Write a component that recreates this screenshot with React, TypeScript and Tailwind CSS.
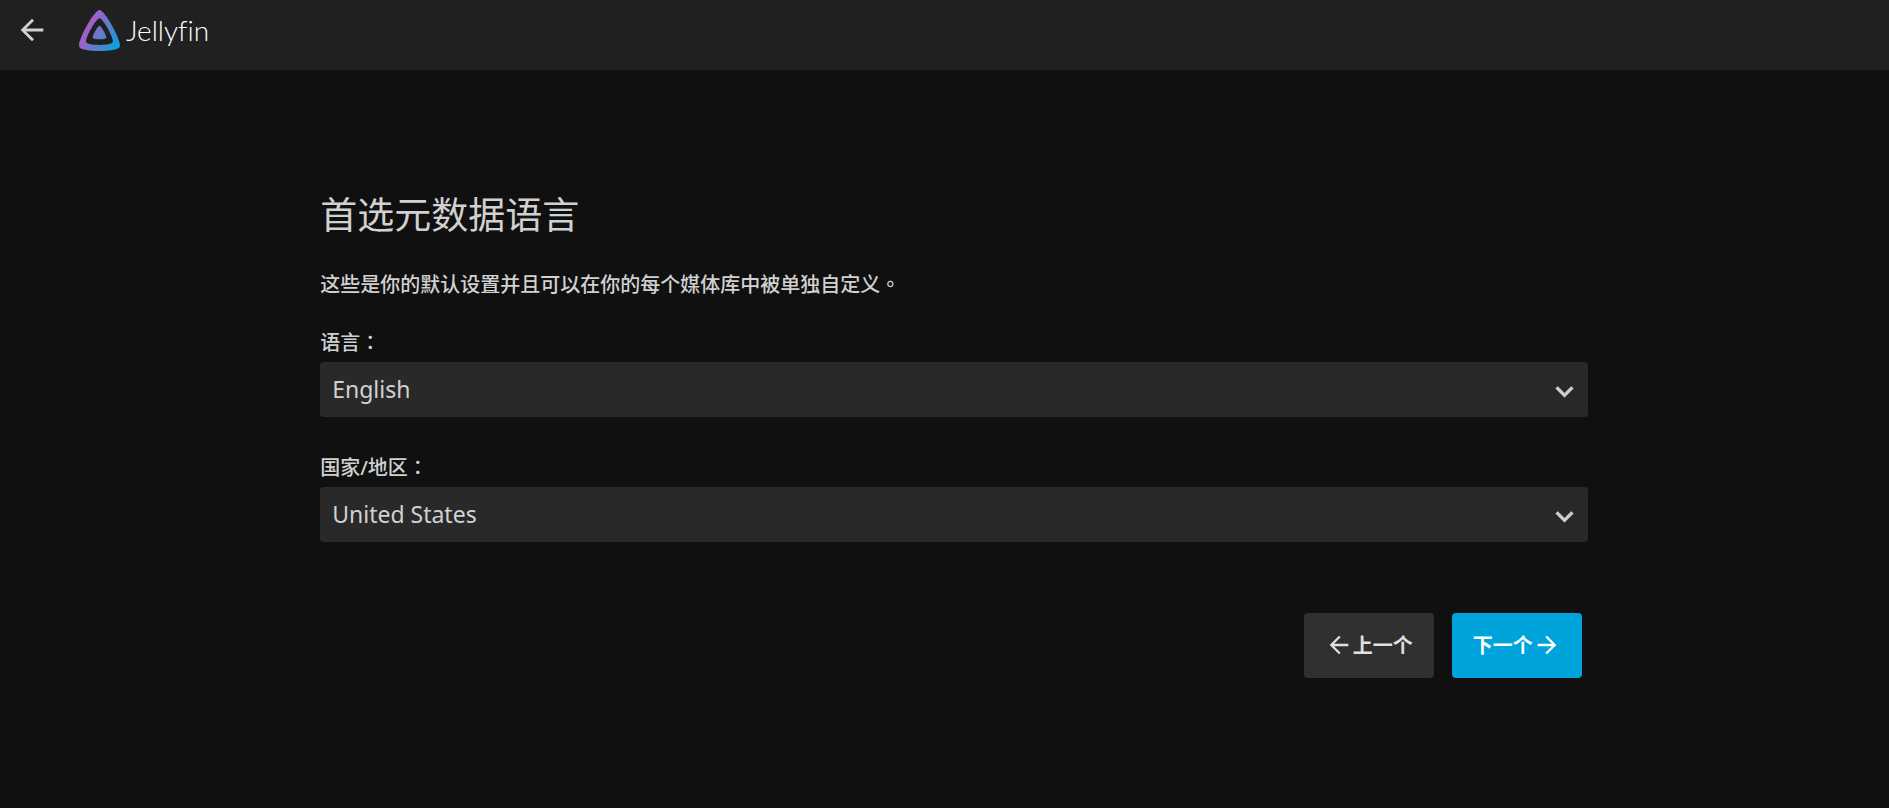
import React, { useState } from 'react';

const ARROW_BACK = 'M20 11H7.83l5.59-5.59L12 4l-8 8 8 8 1.41-1.41L7.83 13H20v-2z';
const ARROW_FORWARD = 'M12 4l-1.41 1.41L16.17 11H4v2h12.17l-5.58 5.59L12 20l8-8z';
const CHEVRON_DOWN = 'M7.41 8.59L12 13.17l4.59-4.58L18 10l-6 6-6-6 1.41-1.41z';

const Icon: React.FC<{ path: string; className: string }> = ({ path, className }) => (
  <svg viewBox="0 0 24 24" fill="currentColor" className={className} aria-hidden="true">
    <path d={path} />
  </svg>
);

const Logo: React.FC = () => (
  <svg viewBox="0 0 512 512" className="size-[45px]" aria-hidden="true">
    <defs>
      <linearGradient id="logo-gradient" gradientUnits="userSpaceOnUse" x1="110.25" y1="213.3" x2="496.14" y2="436.09">
        <stop offset="0" stopColor="#aa5cc3" />
        <stop offset="1" stopColor="#00a4dc" />
      </linearGradient>
    </defs>
    <path
      fill="url(#logo-gradient)"
      d="M256 201.62c-20.44 0-86.23 119.29-76.2 139.43s142.48 19.92 152.4 0S276.47 201.63 256 201.62z"
    />
    <path
      fill="url(#logo-gradient)"
      d="M256 23.3c-61.56 0-259.82 359.43-229.59 420.13S455.45 503.48 485.55 443.43 317.58 23.3 256 23.3zm150.51 367.5c-19.76 39.37-281.68 39.8-301.22 0S215.9 115.48 256.23 115.48 426.5 351.4 406.51 390.8z"
    />
  </svg>
);

interface SelectFieldProps {
  id: string;
  label: string;
  value: string;
  options: string[];
  onChange: (value: string) => void;
}

const SelectField: React.FC<SelectFieldProps> = ({ id, label, value, options, onChange }) => (
  <div className="mb-9">
    <label htmlFor={id} className="block mb-1 font-medium leading-[30px]">
      {label}
    </label>
    <div className="relative">
      <select
        id={id}
        value={value}
        onChange={(e) => onChange(e.target.value)}
        className="block w-full h-[55px] appearance-none rounded-[4px] bg-[#292929] pl-3 pr-12 text-[23px] focus:outline-none"
      >
        {options.map((option) => (
          <option key={option}>{option}</option>
        ))}
      </select>
      <Icon path={CHEVRON_DOWN} className="pointer-events-none absolute right-1.5 top-3 size-[35px] stroke-current stroke-[0.4]" />
    </div>
  </div>
);

const App: React.FC = () => {
  const [language, setLanguage] = useState<string>('English');
  const [country, setCountry] = useState<string>('United States');

  return (
    <div className="min-h-screen bg-[#101010] text-[20px] text-[#d1d1d1] font-['Noto_Sans','Noto_Sans_CJK_TC',sans-serif]">
      <header className="flex h-[70px] items-start bg-[#202020] px-[15px] pt-2">
        <button type="button" aria-label="返回" className="mt-[5px]">
          <Icon path={ARROW_BACK} className="size-[34px]" />
        </button>
        <h1 className="ml-7 flex items-center gap-1 text-white">
          <Logo />
          <span className="font-['Lato',sans-serif] text-[28px] leading-[45px] font-light [font-variant-ligatures:none]">
            Jellyfin
          </span>
        </h1>
      </header>

      <main className="ml-[16.95%] mr-[15.95%] pt-[118px]">
        <form onSubmit={(e) => e.preventDefault()}>
          <h2 className="text-[37px] leading-[54px]">首选元数据语言</h2>
          <p className="my-7 font-medium leading-[30px]">这些是你的默认设置并且可以在你的每个媒体库中被单独自定义。</p>

          <SelectField
            id="language"
            label="语言："
            value={language}
            options={['English', '中文', '日本語']}
            onChange={setLanguage}
          />
          <SelectField
            id="country"
            label="国家/地区："
            value={country}
            options={['United States', '中国', '日本']}
            onChange={setCountry}
          />

          <div className="mt-[71px] mr-1.5 flex justify-end gap-[18px] font-bold">
            <button type="button" className="flex h-[65px] w-[130px] items-center justify-center rounded-[4px] bg-[#303030] text-[#e0e0e0]">
              <Icon path={ARROW_BACK} className="mb-0.5 size-7" />
              <span>上一个</span>
            </button>
            <button type="submit" className="flex h-[65px] w-[130px] items-center justify-center rounded-[4px] bg-[#00a4dc] text-white">
              <span>下一个</span>
              <Icon path={ARROW_FORWARD} className="mb-0.5 size-7" />
            </button>
          </div>
        </form>
      </main>
    </div>
  );
};

export default App;
